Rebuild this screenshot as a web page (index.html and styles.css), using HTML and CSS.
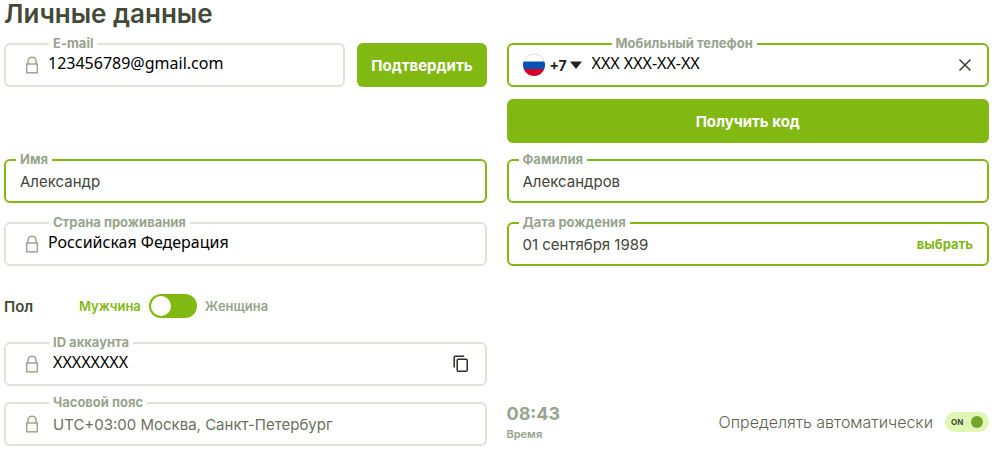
FILE: index.html
```html
<!DOCTYPE html>
<html lang="ru">

<head>
    <meta charset="utf-8">
    <meta name="viewport" content="width=device-width, initial-scale=1">
    <title>Личные данные</title>
    <link rel="stylesheet" href="styles.css">
</head>

<body>
    <svg class="sprite" aria-hidden="true">
        <symbol id="lock" viewBox="0 0 14 18">
            <rect x="1.7" y="8" width="10.6" height="8.8" fill="none" stroke="currentColor" stroke-width="1.5"/>
            <path d="M3 8V5.2C3 2.8 4.8 1.2 7 1.2s4 1.6 4 4V8" fill="none" stroke="currentColor" stroke-width="1.5"/>
        </symbol>
    </svg>

    <form class="profile">
        <h1>Личные данные</h1>

        <div class="row contacts">
            <div class="email">
                <div class="field locked">
                    <label for="email">E-mail</label>
                    <svg class="lock"><use href="#lock"/></svg>
                    <input class="plain" type="email" id="email" value="123456789@gmail.com" readonly>
                </div>
                <button type="button" class="btn">Подтвердить</button>
            </div>
            <div class="phone">
                <div class="field active phone-field">
                    <label for="phone">Мобильный телефон</label>
                    <svg class="flag" viewBox="0 0 22 22">
                        <clipPath id="round"><circle cx="11" cy="11" r="11"/></clipPath>
                        <g clip-path="url(#round)">
                            <rect width="22" height="22" fill="#fff"/>
                            <rect y="7.5" width="22" height="8" fill="#0052b4"/>
                            <rect y="15" width="22" height="7" fill="#d80027"/>
                        </g>
                        <path d="M0.9 7.5a10.6 10.6 0 0 1 20.2 0" fill="none" stroke="#c9d6dc" stroke-width="0.8"/>
                    </svg>
                    <div class="code">
                        <select aria-label="Код страны">
                            <option>+7</option>
                        </select>
                        <svg class="arrow" viewBox="0 0 12 8"><path d="M0 0.5h12L6 8z" fill="#222"/></svg>
                    </div>
                    <input class="plain" type="tel" id="phone" value="XXX XXX-XX-XX">
                    <button type="button" class="icon-btn" aria-label="Очистить">
                        <svg viewBox="0 0 16 16" width="16" height="16"><path d="M2.5 2.5l11 11M13.5 2.5l-11 11" stroke="#3a3f33" stroke-width="1.5"/></svg>
                    </button>
                </div>
                <button type="button" class="btn">Получить код</button>
            </div>
        </div>

        <div class="row names">
            <div class="field active">
                <label for="name">Имя</label>
                <input type="text" id="name" value="Александр">
            </div>
            <div class="field active">
                <label for="surname">Фамилия</label>
                <input type="text" id="surname" value="Александров">
            </div>
        </div>

        <div class="row">
            <div class="field locked">
                <label for="country">Страна проживания</label>
                <svg class="lock"><use href="#lock"/></svg>
                <input class="plain" type="text" id="country" value="Российская Федерация" readonly>
            </div>
            <div class="field active">
                <label for="birth">Дата рождения</label>
                <input type="text" id="birth" value="01 сентября 1989">
                <button type="button" class="choose">выбрать</button>
            </div>
        </div>

        <div class="gender">
            <span class="gender-title">Пол</span>
            <label class="male" for="gender">Мужчина</label>
            <input type="checkbox" class="switch" id="gender">
            <label for="gender">Женщина</label>
        </div>

        <div class="row account">
            <div class="field locked wide">
                <label for="account">ID аккаунта</label>
                <svg class="lock"><use href="#lock"/></svg>
                <input class="plain" type="text" id="account" value="XXXXXXXX" readonly>
                <button type="button" class="icon-btn" aria-label="Скопировать">
                    <svg viewBox="0 0 16 18" width="16" height="18" fill="none" stroke="#2b3024" stroke-width="1.5"><rect x="4.2" y="4.2" width="10" height="12" rx="1"/><path d="M1.2 12.5V2.2a1 1 0 0 1 1-1h9"/></svg>
                </button>
            </div>
        </div>

        <div class="row">
            <div class="field locked wide">
                <label for="zone">Часовой пояс</label>
                <svg class="lock"><use href="#lock"/></svg>
                <input class="zone" type="text" id="zone" value="UTC+03:00 Москва, Санкт-Петербург" readonly>
            </div>
            <div class="time">
                <div class="clock">
                    <b>08:43</b>
                    <span>Время</span>
                </div>
                <label class="auto">
                    Определять автоматически
                    <span class="toggle"><input type="checkbox" checked><span>ON</span></span>
                </label>
            </div>
        </div>
    </form>
</body>

</html>
```

FILE: styles.css
```css
* {
    box-sizing: border-box;
}

body {
    margin: 0;
    background-color: #fff;
    color: #434a37;
    font-family: Inter, "Open Sans", sans-serif;
    font-size: 16px;
}

.sprite {
    display: none;
}

.profile {
    padding: 0 11px 8px 4px;
}

h1 {
    margin: 0;
    padding-bottom: 15px;
    font-size: 26px;
    line-height: 28px;
    font-weight: 600;
}

.row {
    display: grid;
    grid-template-columns: 1fr 1fr;
    gap: 20px;
}

.contacts,
.account {
    margin-bottom: 16px;
}

.names {
    margin-bottom: 19px;
}

.email {
    display: flex;
    align-items: flex-start;
    gap: 12px;
}

.email .field {
    flex: 1;
}

.phone {
    display: grid;
    gap: 12px;
}

.field {
    position: relative;
    display: flex;
    align-items: center;
    height: 44px;
    padding: 0 14px;
    border: 2px solid #dfe4da;
    border-radius: 6px;
}

.field.active {
    border-color: #82b812;
}

.field.locked {
    padding: 0 16px 0 19px;
}

.field label {
    position: absolute;
    top: -10px;
    left: 10px;
    padding: 0 4px;
    background-color: #fff;
    color: #98a48e;
    font-size: 13px;
    line-height: 16px;
    font-weight: 700;
}

.locked label {
    left: 43px;
}

.phone-field label {
    left: 103px;
}

.field input {
    flex: 1;
    min-width: 0;
    height: 32px;
    padding: 0;
    border: 0;
    outline: 0;
    background: none;
    color: #3f4536;
    font: 15px Inter, sans-serif;
}

.field .plain {
    height: 36px;
    padding-bottom: 4px;
    color: #000;
    font: 16px "Noto Sans", sans-serif;
}

.field .zone {
    color: #6a705f;
}

.lock {
    width: 14px;
    height: 18px;
    margin-right: 9px;
    color: #98a890;
}

.wide .lock {
    margin-right: 14px;
}

button {
    padding: 0;
    border: 0;
    background: none;
    font-family: inherit;
    cursor: pointer;
}

.btn {
    height: 44px;
    padding: 0 14px;
    border-radius: 6px;
    background-color: #82b812;
    color: #fff;
    font-size: 15px;
    font-weight: 700;
}

.icon-btn {
    display: flex;
}

.choose {
    color: #82b812;
    font-size: 13px;
    font-weight: 700;
}

.flag {
    width: 22px;
    height: 22px;
    margin-right: 5px;
}

.code {
    position: relative;
    margin-right: 10px;
}

.code select {
    width: 32px;
    padding: 0;
    border: 0;
    appearance: none;
    background: none;
    color: #222;
    font: 700 14px Inter, sans-serif;
}

.arrow {
    position: absolute;
    top: 6px;
    right: 0;
    width: 12px;
    height: 8px;
    pointer-events: none;
}

.gender {
    display: flex;
    align-items: center;
    gap: 8px;
    margin: 28px 0 24px;
    color: #98a48e;
    font-size: 13px;
    font-weight: 600;
}

.gender-title {
    width: 67px;
    color: #434a37;
    font-size: 15px;
}

.male {
    color: #82b812;
}

.switch {
    width: 48px;
    height: 24px;
    margin: 0;
    padding: 2px;
    border-radius: 12px;
    appearance: none;
    background-color: #82b812;
}

.switch::before {
    content: "";
    display: block;
    width: 20px;
    height: 20px;
    border-radius: 50%;
    background-color: #fff;
}

.switch:checked::before {
    margin-left: auto;
}

.time {
    display: flex;
    align-items: flex-start;
    justify-content: space-between;
    color: #98a48e;
}

.clock b {
    display: block;
    font-size: 18px;
    line-height: 24px;
    font-weight: 700;
}

.clock span {
    display: block;
    font-size: 11px;
    line-height: 16px;
    font-weight: 600;
}

.auto {
    display: flex;
    align-items: center;
    gap: 12px;
    height: 40px;
    color: #5c6350;
    font-size: 16px;
    font-weight: 300;
}

.toggle {
    position: relative;
    display: flex;
}

.toggle input {
    width: 44px;
    height: 20px;
    margin: 0;
    padding: 4px 6px;
    border-radius: 10px;
    appearance: none;
    background-color: #e1f5b5;
}

.toggle input::before {
    content: "";
    display: block;
    width: 12px;
    height: 12px;
    border-radius: 50%;
    background-color: #73a52b;
}

.toggle input:checked::before {
    margin-left: auto;
}

.toggle span {
    position: absolute;
    top: 4px;
    left: 6px;
    color: #3f4536;
    font-size: 8px;
    line-height: 12px;
    font-weight: 700;
}
```
